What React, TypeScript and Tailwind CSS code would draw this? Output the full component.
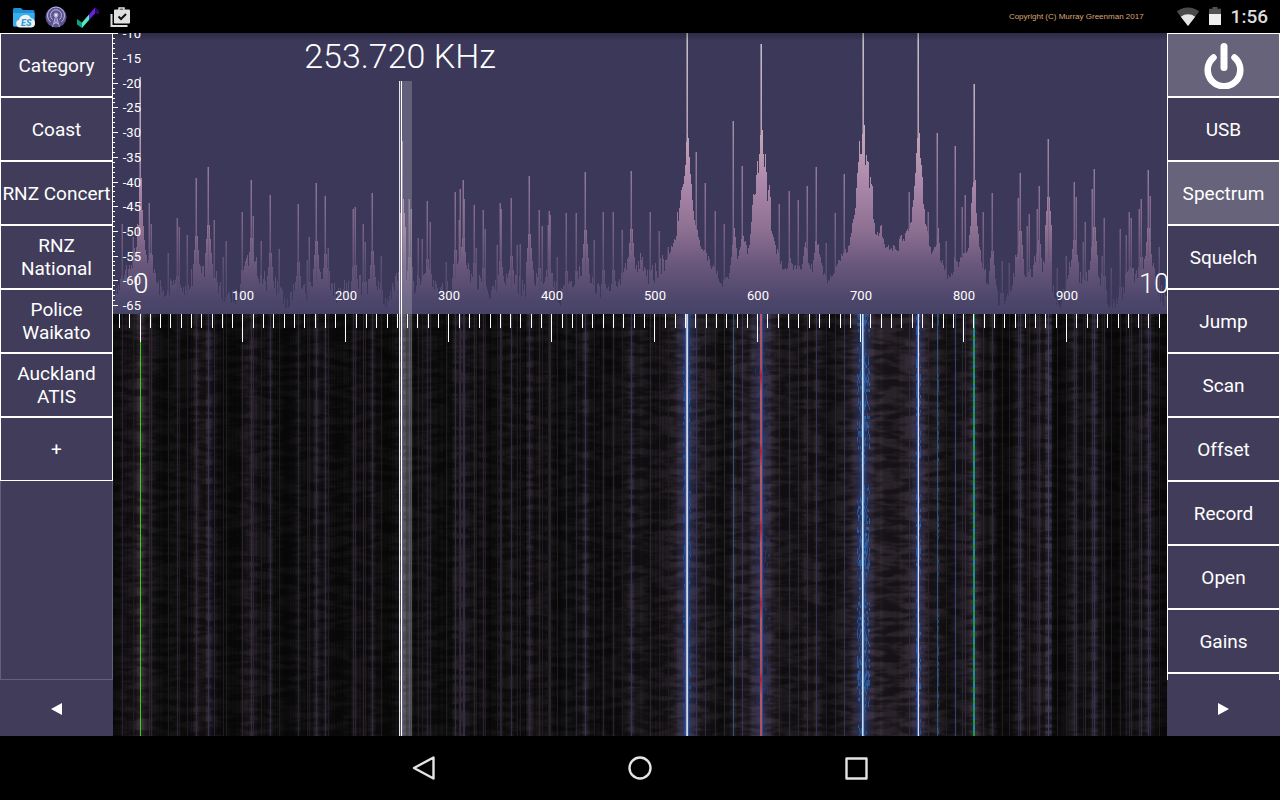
import React from 'react';

// Receiver trace, in display units: x runs 113..1167, y runs 33 (strong) to 314 (noise floor).
const LEFT = 113;
const RIGHT = 1167;
const FLOOR = 314;
const BOTTOM = 736;

const peaks: [number, number][] = [
  [122, 224], [133, 237], [149, 203], [151, 224], [168, 253], [177, 218], [179, 227], [187, 235],
  [196, 178], [208, 167], [214, 220], [223, 257], [226, 241], [242, 212], [251, 180], [253, 216],
  [261, 241], [270, 195], [279, 249], [298, 204], [307, 260], [309, 237], [316, 183], [325, 196],
  [328, 248], [353, 209], [355, 207], [363, 224], [365, 242], [372, 193], [381, 256], [402, 141],
  [409, 199], [411, 209], [418, 238], [422, 239], [427, 201], [430, 222], [446, 262], [455, 192],
  [459, 220], [460, 189], [463, 180], [464, 199], [474, 205], [476, 248], [483, 210], [485, 229],
  [497, 245], [500, 203], [501, 209], [511, 198], [517, 245], [520, 244], [529, 176], [539, 210],
  [542, 226], [548, 225], [549, 211], [550, 215], [557, 257], [566, 213], [576, 213], [585, 172],
  [594, 240], [603, 212], [613, 212], [622, 230], [631, 171], [650, 212], [659, 231], [668, 247],
  [696, 152], [705, 183], [715, 211], [724, 224], [733, 121], [742, 166], [779, 204], [789, 191],
  [798, 200], [807, 186], [816, 167], [826, 243], [835, 213], [844, 174], [909, 192], [928, 212],
  [937, 133], [946, 241], [955, 146], [962, 207], [965, 195], [983, 212], [992, 193], [1002, 261],
  [1009, 263], [1018, 198], [1020, 173], [1027, 226], [1029, 214], [1037, 209], [1039, 186],
  [1048, 139], [1057, 268], [1066, 256], [1074, 182], [1076, 197], [1083, 242], [1085, 222],
  [1092, 189], [1094, 169], [1102, 256], [1104, 218], [1111, 268], [1120, 229], [1126, 235],
  [1129, 212], [1131, 218], [1139, 209], [1141, 199], [1148, 170], [1150, 196], [1159, 247],
];

const carriers: [number, number][] = [
  [140, 77], [687, 33], [761, 44], [863, 33], [918, 33], [974, 84],
];

const envelope: [number, number][] = [
  [113, 296], [118, 286], [126, 272], [132, 262], [136, 246], [138, 217], [139, 189], [140, 180],
  [141, 182], [142, 205], [143, 227], [145, 243], [148, 262], [151, 256], [156, 284], [163, 290],
  [172, 284], [184, 290], [194, 270], [203, 272], [213, 270], [222, 292], [230, 298], [238, 290],
  [247, 262], [253, 258], [262, 278], [275, 284], [286, 304], [296, 284], [305, 292], [316, 268],
  [326, 272], [336, 292], [350, 284], [355, 278], [366, 288], [372, 276], [386, 298], [400, 270],
  [414, 288], [427, 264], [438, 290], [450, 288], [459, 254], [464, 252], [470, 276], [480, 280],
  [490, 294], [500, 280], [512, 276], [525, 290], [529, 262], [540, 284], [548, 272], [560, 296],
  [570, 288], [584, 264], [592, 280], [600, 292], [612, 278], [619, 286], [630, 250], [635, 266],
  [641, 258], [648, 276], [655, 270], [665, 258], [673, 243], [676, 233], [677, 210], [678, 219],
  [679, 204], [681, 190], [683, 182], [685, 167], [686, 138], [688, 133], [689, 160], [690, 173],
  [691, 182], [692, 201], [694, 217], [695, 223], [697, 231], [700, 245], [705, 252], [712, 267],
  [717, 273], [722, 284], [728, 277], [731, 254], [734, 224], [737, 257], [740, 243], [743, 235],
  [747, 250], [749, 240], [751, 221], [753, 194], [755, 197], [757, 158], [758, 175], [760, 134],
  [762, 131], [763, 152], [764, 169], [765, 153], [767, 197], [769, 182], [770, 197], [771, 231],
  [775, 247], [778, 254], [780, 262], [787, 270], [789, 252], [793, 266], [801, 269], [805, 243],
  [808, 260], [812, 269], [815, 240], [818, 247], [823, 270], [827, 282], [832, 273], [837, 265],
  [842, 252], [847, 248], [850, 238], [853, 220], [855, 207], [856, 185], [858, 165], [859, 143],
  [861, 157], [862, 135], [864, 127], [865, 162], [866, 153], [868, 163], [869, 191], [870, 178],
  [872, 188], [873, 219], [875, 230], [878, 235], [881, 225], [883, 240], [886, 246], [898, 249],
  [900, 236], [903, 239], [907, 230], [911, 217], [913, 197], [915, 174], [917, 137], [919, 130],
  [920, 158], [922, 174], [923, 203], [925, 220], [929, 242], [932, 254], [935, 248], [938, 230],
  [940, 257], [944, 267], [947, 277], [952, 275], [954, 260], [958, 263], [961, 256], [967, 253],
  [970, 227], [972, 184], [975, 180], [976, 213], [979, 243], [981, 262], [986, 276], [989, 272],
  [992, 252], [995, 282], [998, 298], [1002, 284], [1005, 306], [1010, 290], [1016, 257], [1019, 249],
  [1022, 260], [1026, 274], [1032, 272], [1037, 240], [1042, 274], [1047, 246], [1050, 268],
  [1053, 290], [1060, 306], [1066, 278], [1073, 240], [1080, 278], [1087, 280], [1093, 248],
  [1098, 268], [1107, 300], [1115, 306], [1123, 290], [1130, 262], [1134, 280], [1140, 270],
  [1147, 246], [1151, 252], [1156, 282], [1163, 296], [1167, 290],
];

function createRandom(seed: number) {
  let state = seed;
  return () => {
    state = (state * 1664525 + 1013904223) % 4294967296;
    return state / 4294967296;
  };
}

function envelopeAt(x: number) {
  for (let i = 1; i < envelope.length; i++) {
    const [x1, y1] = envelope[i];
    if (x <= x1) {
      const [x0, y0] = envelope[i - 1];
      return y0 + ((y1 - y0) * (x - x0)) / (x1 - x0);
    }
  }
  return FLOOR;
}

function buildTrace() {
  const random = createRandom(17);
  const tops: number[] = [];
  for (let x = LEFT; x < RIGHT; x++) {
    const quiet = x < 665 || x > 982;
    const spread = quiet ? 20 : 8;
    let y = envelopeAt(x) + (random() - 0.4) * spread;
    if (quiet) {
      for (const [px, py] of peaks) {
        const dx = Math.abs(px - x);
        if (dx > 0 && dx < 4) y = Math.min(y, py + 58 + (dx - 1) * 14);
      }
    }
    tops.push(Math.min(FLOOR - 6, Math.round(y)));
  }
  return tops;
}

const trace = buildTrace();
const tracePath =
  `M${LEFT} ${FLOOR}` + trace.map((y, i) => `V${y}H${LEFT + i + 1}`).join('') + `V${FLOOR}Z`;

const xOf = (khz: number) => Math.floor(140 + khz * 1.0295);
const yOf = (db: number) => Math.round(58 + (-15 - db) * 4.94);

const ticks = Array.from({ length: 102 }, (_, i) => (i - 2) * 10);
const dbTicks = Array.from({ length: 56 }, (_, i) => -10 - i);
const labels = [100, 200, 300, 400, 500, 600, 700, 800, 900];

function Spectrum() {
  return (
    <g>
      <rect x={LEFT} y="33" width="1054" height="281" fill="#3b385a" />
      <path d={tracePath} fill="url(#signal)" />
      {peaks.map(([x, y]) => (
        <g key={x} fill="url(#signal)">
          <rect x={x - 1} y={y} width="1" height={FLOOR - y} opacity="0.35" />
          <rect x={x} y={y} width="1" height={FLOOR - y} opacity="0.75" />
        </g>
      ))}
      {carriers.map(([x, y]) => (
        <g key={x} fill="url(#signal)">
          <rect x={x - 1} y={y} width="1" height={FLOOR - y} opacity="0.5" />
          <rect x={x} y={y} width="1" height={FLOOR - y} opacity="0.9" />
        </g>
      ))}
      <rect x={LEFT} y="33" width="1054" height="8" fill="url(#shade)" />
    </g>
  );
}

function lineColor(y: number) {
  if (y < 135) return '#2c567f';
  if (y < 150) return '#33427c';
  if (y < 175) return '#30335c';
  if (y < 200) return '#302b40';
  if (y < 225) return '#2b2430';
  return '#221c22';
}

// Flickering side bands: [first x, last x, colour, density]
const bands: [number, number, string, number][] = [
  [683, 690, '#2458a8', 0.3],
  [755, 769, '#2c3468', 0.35],
  [857, 869, '#2a69b4', 0.5],
  [916, 920, '#2c68b8', 0.55],
  [937, 938, '#285080', 0.5],
];

function buildFlicker() {
  const random = createRandom(91);
  const cells: { x: number; y: number; h: number; fill: string; opacity: number }[] = [];
  for (const [from, to, fill, density] of bands) {
    const mid = (from + to) / 2;
    for (let y = FLOOR; y < BOTTOM; y += 3) {
      const burst = 0.6 + 0.5 * Math.sin(y / 13) * Math.cos(y / 37);
      for (let x = from; x <= to; x++) {
        const near = 1.3 - Math.abs(x - mid) / (to - from + 1);
        if (random() < density * burst * near) {
          cells.push({ x, y, h: Math.min(3, BOTTOM - y), fill, opacity: 0.4 + Math.round(random() * 5) / 10 });
        }
      }
    }
  }
  return cells;
}

const flicker = buildFlicker();

function Waterfall() {
  return (
    <g>
      <rect x={LEFT} y={FLOOR} width="1054" height="422" fill="#0c0d0c" />
      {trace.map((y, i) => {
        const level = Math.max(0, Math.min(1, (300 - y) / 90));
        return (
          <rect key={i} x={LEFT + i} y={FLOOR} width="1" height="422" fill="#4a3c4c" opacity={level * 0.8} />
        );
      })}
      <rect x={LEFT} y={FLOOR} width="1054" height="422" filter="url(#grain)" opacity="0.45" />
      {peaks.map(([x, y]) => (
        <rect key={x} x={x} y={FLOOR} width="1" height="422" fill={lineColor(y)} />
      ))}
      <rect x="675" y={FLOOR} width="24" height="422" fill="url(#glow)" opacity="0.8" />
      <rect x="748" y={FLOOR} width="26" height="422" fill="url(#glow)" opacity="0.45" />
      <rect x="851" y={FLOOR} width="24" height="422" fill="url(#glow)" opacity="0.9" />
      <rect x="911" y={FLOOR} width="15" height="422" fill="url(#glow)" opacity="0.8" />
      {flicker.map((c, i) => (
        <rect key={i} x={c.x} y={c.y} width="1" height={c.h} fill={c.fill} opacity={c.opacity} />
      ))}
      <rect x="685" y={FLOOR} width="4" height="422" fill="#2a5298" />
      <rect x="686" y={FLOOR} width="1" height="422" fill="#a9b8da" />
      <rect x="687" y={FLOOR} width="1" height="422" fill="#dcd4de" />
      <rect x="760" y={FLOOR} width="2" height="422" fill="url(#redLine)" />
      <rect x="762" y={FLOOR} width="1" height="422" fill="#2c4c8c" />
      <rect x="862" y={FLOOR} width="1" height="422" fill="#d8d8ea" />
      <rect x="863" y={FLOOR} width="1" height="422" fill="#6ca4dc" />
      <rect x="917" y={FLOOR} width="1" height="422" fill="#3c70bc" />
      <rect x="918" y={FLOOR} width="1" height="422" fill="#f4d4dc" />
      <rect x="973" y={FLOOR} width="2" height="422" fill="url(#greenLine)" />
      <rect x="140" y={FLOOR} width="1" height="422" fill="#3ad400" />
    </g>
  );
}

function SignalDisplay() {
  return (
    <svg
      className="block h-full w-full"
      viewBox="113 33 1054 703"
      preserveAspectRatio="xMidYMin slice"
      fontFamily="Roboto, sans-serif"
      fill="white"
      role="img"
      aria-label="Spectrum and waterfall"
    >
      <defs>
        <linearGradient id="signal" gradientUnits="userSpaceOnUse" x1="0" y1="33" x2="0" y2="314">
          <stop offset="0" stopColor="#d4d0d4" />
          <stop offset="0.3" stopColor="#c9b0bf" />
          <stop offset="0.42" stopColor="#bc9bb2" />
          <stop offset="0.54" stopColor="#aa87ab" />
          <stop offset="0.7" stopColor="#8d7092" />
          <stop offset="0.82" stopColor="#6a587c" />
          <stop offset="0.95" stopColor="#4d466b" />
          <stop offset="1" stopColor="#464367" />
        </linearGradient>
        <linearGradient id="shade" x1="0" y1="0" x2="0" y2="1">
          <stop offset="0" stopColor="#000" stopOpacity="0.25" />
          <stop offset="1" stopColor="#000" stopOpacity="0" />
        </linearGradient>
        <linearGradient id="glow" x1="0" y1="0" x2="1" y2="0">
          <stop offset="0" stopColor="#2c3468" stopOpacity="0" />
          <stop offset="0.3" stopColor="#2c3468" stopOpacity="0.5" />
          <stop offset="0.5" stopColor="#2858a0" stopOpacity="0.9" />
          <stop offset="0.7" stopColor="#2c3468" stopOpacity="0.5" />
          <stop offset="1" stopColor="#2c3468" stopOpacity="0" />
        </linearGradient>
        <linearGradient id="redLine" gradientUnits="userSpaceOnUse" x1="0" y1="314" x2="0" y2="390" spreadMethod="repeat">
          <stop offset="0" stopColor="#b8586a" />
          <stop offset="0.7" stopColor="#b04a62" />
          <stop offset="0.8" stopColor="#b81e30" />
          <stop offset="1" stopColor="#b05268" />
        </linearGradient>
        <linearGradient id="greenLine" gradientUnits="userSpaceOnUse" x1="0" y1="314" x2="0" y2="325" spreadMethod="repeat">
          <stop offset="0" stopColor="#18a02c" />
          <stop offset="0.4" stopColor="#18a02c" />
          <stop offset="0.4" stopColor="#1890a0" />
          <stop offset="1" stopColor="#1890a0" />
        </linearGradient>
        <filter id="grain" x="0" y="0" width="1" height="1">
          <feTurbulence type="fractalNoise" baseFrequency="0.04 0.16" numOctaves="3" seed="4" />
          <feColorMatrix values="0 0 0 0 0  0 0 0 0 0  0 0 0 0 0  4 0 0 0 -1.5" />
        </filter>
      </defs>

      <Spectrum />
      <Waterfall />

      {ticks.map((khz) => (
        <rect key={khz} x={xOf(khz)} y={FLOOR} width="1" height={khz % 100 === 0 ? 28 : 14} />
      ))}
      {dbTicks.map((db) => (
        <rect key={db} x={LEFT} y={yOf(db)} width={db % 5 === 0 ? 5 : 2} height="1" />
      ))}

      {dbTicks.filter((db) => db % 5 === 0).map((db) => (
        <text key={db} x="141" y={yOf(db) + 5} fontSize="13" textAnchor="end">{db}</text>
      ))}
      {labels.map((khz) => (
        <text key={khz} x={xOf(khz) + 1} y="300" fontSize="13" textAnchor="middle">{khz}</text>
      ))}
      <text x="141" y="293" fontSize="27" fontWeight="300" textAnchor="middle">0</text>
      <text x="1169" y="293" fontSize="27" fontWeight="300" textAnchor="middle">1000</text>
      <text x="400" y="68" fontSize="34" fontWeight="300" textAnchor="middle">253.720 KHz</text>

      <rect x="400" y="81" width="12" height="655" opacity="0.2" />
      <rect x="399" y="81" width="1" height="655" fill="#e4e4ea" />
      <rect x="401" y="81" width="1" height="655" />
    </svg>
  );
}

function PanelButton({ children, active = false, label }: { children?: React.ReactNode; active?: boolean; label?: string }) {
  return (
    <button
      aria-label={label}
      className={`flex h-16 w-full shrink-0 items-center justify-center border border-white text-center text-[19px] leading-[23px] text-white ${
        active ? 'bg-[#66637b]' : 'bg-[#403c5a]'
      }`}
    >
      {children}
    </button>
  );
}

const memories = ['Category', 'Coast', 'RNZ Concert', 'RNZ National', 'Police Waikato', 'Auckland ATIS', '+'];
const controls = ['USB', 'Spectrum', 'Squelch', 'Jump', 'Scan', 'Offset', 'Record', 'Open', 'Gains'];

function StatusBar() {
  return (
    <header className="flex h-[33px] shrink-0 items-center justify-between bg-black px-3">
      <div className="flex items-center gap-2">
        <svg width="24" height="24" viewBox="0 0 24 24">
          <path d="M1 4.500Q1 3 2.500 3H9l2 2h10q1.500 0 1.500 1.500V20q0 1.500-1.500 1.500H2.500Q1 21.500 1 20z" fill="#1c8fd8" />
          <path d="M1 8h21.500v12q0 1.500-1.500 1.500H2.500Q1 21.500 1 20z" fill="#3aaeea" />
          <path d="M8 22.500a4 4 0 0 1-1-7.800 6.500 6.500 0 0 1 12-1.400 4.700 4.700 0 0 1 .5 9.200z" fill="#f1f1f1" />
          <text x="9" y="21" fontFamily="Roboto, sans-serif" fontSize="9" fontWeight="900" fontStyle="italic" fill="#2f9ddc">ES</text>
        </svg>
        <svg width="24" height="24" viewBox="0 0 24 24" fill="none">
          <circle cx="12" cy="12" r="10.500" fill="#5c5490" />
          <g stroke="#bcb8dc">
            <circle cx="12" cy="10" r="2" />
            <path d="M8.500 14.500a5.500 5.500 0 1 1 7 0M6.500 17a8.500 8.500 0 1 1 11 0" />
            <path d="M12 10L8.500 22M12 10l3.500 12M10.500 15h3M9.700 18h4.600M10 16l4.500 3M14 16l-4.500 3" strokeWidth="0.8" />
          </g>
          <circle cx="12" cy="10" r="1.300" fill="#e6e4f4" />
        </svg>
        <svg width="24" height="24" viewBox="0 0 24 24">
          <path d="M1 14l5 3.500V23l-5-3.500z" fill="#0f9f86" />
          <path d="M6 17.500l7-8v5.500l-7 8z" fill="#55e8c4" />
          <path d="M13 9.500l6-7v6l-6 6.500z" fill="#6a20d8" />
          <path d="M19 2.500l4 3v4l-4-1.500z" fill="#2c0a6c" />
        </svg>
        <svg width="24" height="24" viewBox="0 0 24 24" fill="none">
          <path d="M3.500 9v12h16" stroke="#e0e0e0" strokeWidth="2" />
          <path d="M11 5V3h5v2" stroke="#e0e0e0" strokeWidth="1.500" />
          <rect x="6" y="4.500" width="16" height="14" rx="1" fill="#e0e0e0" />
          <path d="M10.500 11.500l2.500 2.500 5-5" stroke="#111" strokeWidth="2" />
        </svg>
      </div>
      <div className="flex items-center">
        <span className="mr-8 font-['Liberation_Sans',sans-serif] text-[8px] text-[#dba874]">
          Copyright (C) Murray Greenman 2017
        </span>
        <svg width="24" height="20" viewBox="0 0 24 20" className="mr-[7px]">
          <path d="M12 19L.8 4.500a18 18 0 0 1 22.400 0z" fill="#4a4a4a" />
          <path d="M12 19L4.800 9.700a12 12 0 0 1 14.400 0z" fill="#e6e6e6" />
        </svg>
        <svg width="16" height="20" viewBox="0 0 16 20" className="mr-2">
          <path d="M2 7.500V1.800h3.500V0h5v1.800H14v5.700z" fill="#525252" />
          <path d="M2 7h12v11H2z" fill="#eee" />
        </svg>
        <span className="pt-px text-[19px] font-medium text-[#dedede]">1:56</span>
      </div>
    </header>
  );
}

export default function App() {
  return (
    <div className="flex h-screen flex-col overflow-hidden bg-black font-[Roboto,sans-serif] text-white">
      <StatusBar />

      <main className="flex min-h-0 flex-1">
        <aside className="flex w-[113px] shrink-0 flex-col bg-[#403c5a]">
          <div className="flex min-h-0 flex-1 flex-col overflow-hidden">
            {memories.map((name) => (
              <PanelButton key={name}>{name}</PanelButton>
            ))}
            <div className="flex-1 border border-t-0 border-[#62607a]" />
          </div>
          <button aria-label="Previous" className="flex h-14 shrink-0 items-center justify-center pt-0.5">
            <svg width="12" height="12" viewBox="0 0 12 12" fill="white"><path d="M0 6L11 0v12z" /></svg>
          </button>
        </aside>

        <section className="min-w-0 flex-1 overflow-hidden">
          <SignalDisplay />
        </section>

        <aside className="flex w-[113px] shrink-0 flex-col bg-[#403c5a]">
          <div className="flex min-h-0 flex-1 flex-col overflow-hidden">
            <PanelButton active label="Power">
              <svg width="44" height="48" viewBox="0 0 44 48" fill="none" stroke="white" strokeLinecap="round">
                <path d="M22 5.500v21" strokeWidth="7" />
                <path d="M11.500 16.500a16.300 16.300 0 1 0 21 0" strokeWidth="6.500" />
              </svg>
            </PanelButton>
            {controls.map((name) => (
              <PanelButton key={name} active={name === 'Spectrum'}>{name}</PanelButton>
            ))}
            <PanelButton label="More controls" />
          </div>
          <button aria-label="Next" className="flex h-14 shrink-0 items-center justify-center pt-0.5">
            <svg width="12" height="12" viewBox="0 0 12 12" fill="white"><path d="M11 6L0 0v12z" /></svg>
          </button>
        </aside>
      </main>

      <nav className="flex h-16 shrink-0 items-center justify-center gap-48 bg-black">
        <button aria-label="Back">
          <svg width="24" height="24" viewBox="0 0 24 24" fill="none" stroke="#e4e4e4" strokeWidth="2.400" strokeLinejoin="round">
            <path d="M2 12L21.500 1.500v21z" />
          </svg>
        </button>
        <button aria-label="Home">
          <svg width="24" height="24" viewBox="0 0 24 24" fill="none" stroke="#e4e4e4" strokeWidth="2.400">
            <circle cx="12" cy="12" r="10.500" />
          </svg>
        </button>
        <button aria-label="Recent apps">
          <svg width="24" height="24" viewBox="0 0 24 24" fill="none" stroke="#e4e4e4" strokeWidth="2.400" strokeLinejoin="round">
            <rect x="2.500" y="2.500" width="20" height="20" />
          </svg>
        </button>
      </nav>
    </div>
  );
}
